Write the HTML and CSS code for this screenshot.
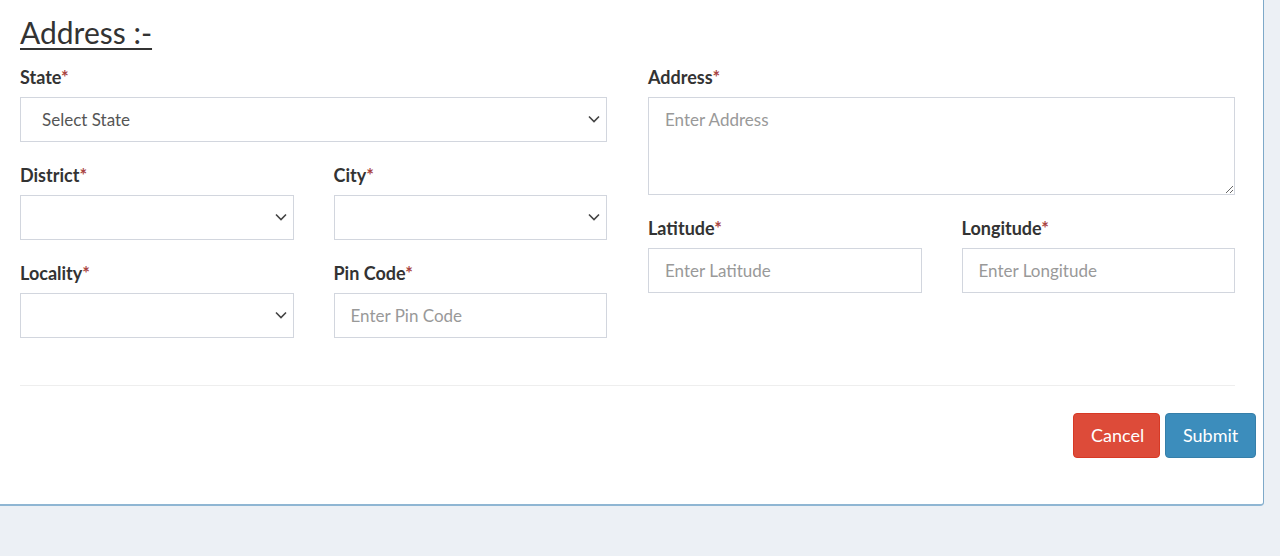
FILE: index.html
```html
<!DOCTYPE html>
<html>
<head>
<meta charset="utf-8">
<link rel="stylesheet" href="styles.css">
</head>
<body>
<div class="card">
  <h3 class="title">Address :-</h3>
  <div class="cols">
    <div class="col">
      <div class="group">
        <label class="lbl">State<span class="req">*</span></label>
        <div class="sel-wrap">
          <select class="ctrl sel"><option>Select State</option></select>
          <svg class="chev" width="12" height="8" viewBox="0 0 12 8"><path d="M1 1.5 L6 6.5 L11 1.5" fill="none" stroke="#444" stroke-width="1.6"/></svg>
        </div>
      </div>
      <div class="pair">
        <div class="group">
          <label class="lbl">District<span class="req">*</span></label>
          <div class="sel-wrap">
            <select class="ctrl sel"><option></option></select>
            <svg class="chev" width="12" height="8" viewBox="0 0 12 8"><path d="M1 1.5 L6 6.5 L11 1.5" fill="none" stroke="#444" stroke-width="1.6"/></svg>
          </div>
        </div>
        <div class="group">
          <label class="lbl">City<span class="req">*</span></label>
          <div class="sel-wrap">
            <select class="ctrl sel"><option></option></select>
            <svg class="chev" width="12" height="8" viewBox="0 0 12 8"><path d="M1 1.5 L6 6.5 L11 1.5" fill="none" stroke="#444" stroke-width="1.6"/></svg>
          </div>
        </div>
        <div class="group">
          <label class="lbl">Locality<span class="req">*</span></label>
          <div class="sel-wrap">
            <select class="ctrl sel"><option></option></select>
            <svg class="chev" width="12" height="8" viewBox="0 0 12 8"><path d="M1 1.5 L6 6.5 L11 1.5" fill="none" stroke="#444" stroke-width="1.6"/></svg>
          </div>
        </div>
        <div class="group">
          <label class="lbl">Pin Code<span class="req">*</span></label>
          <input class="ctrl" type="text" placeholder="Enter Pin Code">
        </div>
      </div>
    </div>
    <div class="col">
      <div class="group">
        <label class="lbl">Address<span class="req">*</span></label>
        <textarea class="ctrl area" placeholder="Enter Address"></textarea>
      </div>
      <div class="pair">
        <div class="group">
          <label class="lbl">Latitude<span class="req">*</span></label>
          <input class="ctrl" type="text" placeholder="Enter Latitude">
        </div>
        <div class="group">
          <label class="lbl">Longitude<span class="req">*</span></label>
          <input class="ctrl" type="text" placeholder="Enter Longitude">
        </div>
      </div>
    </div>
  </div>
  <hr class="rule">
  <div class="actions">
    <button class="btn btn-cancel">Cancel</button>
    <button class="btn btn-submit">Submit</button>
  </div>
</div>
</body>
</html>
```
FILE: styles.css
```css
* { box-sizing: border-box; }
html, body { margin: 0; padding: 0; }
body {
  background: #ecf0f5;
  font-family: Lato, "Noto Sans", sans-serif;
  color: #333;
  height: 556px;
  overflow: hidden;
}
.card {
  width: 1264px;
  height: 506px;
  background: #fff;
  border-right: 1px solid #7ea9c9;
  border-bottom: 2px solid #8fb6d3;
  border-bottom-right-radius: 4px;
  padding: 13px 28px 0 20px;
}
.title {
  margin: 0;
  font-size: 30px;
  font-weight: 400;
  line-height: 38px;
  text-decoration: underline;
  text-underline-offset: 4px;
  text-decoration-thickness: 2px;
  color: #333;
}
.cols {
  display: grid;
  grid-template-columns: 1fr 1fr;
  column-gap: 41px;
  margin-top: 14px;
}
.pair {
  display: grid;
  grid-template-columns: 1fr 1fr;
  column-gap: 40px;
}
.group {
  display: flex;
  flex-direction: column;
  margin-bottom: 21px;
}
.lbl {
  font-size: 18px;
  font-weight: 700;
  line-height: 24px;
  margin-bottom: 8px;
  color: #333;
}
.req { color: #a94442; }
.ctrl {
  display: block;
  width: 100%;
  height: 45px;
  border: 1px solid #d2d6de;
  border-radius: 0;
  background: #fff;
  font-family: inherit;
  font-size: 17px;
  color: #555;
  padding: 0 16px;
  outline: none;
}
.ctrl::placeholder { color: #999; }
.sel-wrap { position: relative; }
.sel {
  appearance: none;
  -webkit-appearance: none;
  padding-left: 21px;
}
.chev {
  position: absolute;
  right: 7px;
  top: 18px;
  pointer-events: none;
}
.area {
  height: 98px;
  padding-top: 11px;
  resize: vertical;
}
.rule {
  border: 0;
  border-top: 1px solid #eee;
  margin: 26px 0 27px 0;
}
.actions {
  display: flex;
  justify-content: flex-end;
  gap: 5px;
  margin-right: -21px;
}
.btn {
  height: 45px;
  border: 1px solid transparent;
  border-radius: 4px;
  color: #fff;
  font-family: inherit;
  font-size: 18px;
  padding: 0 17px 2px;
}
.btn-cancel { background: #dd4b39; border-color: #d73925; width: 87px; }
.btn-submit { background: #3c8dbc; border-color: #367fa9; width: 91px; }
```
